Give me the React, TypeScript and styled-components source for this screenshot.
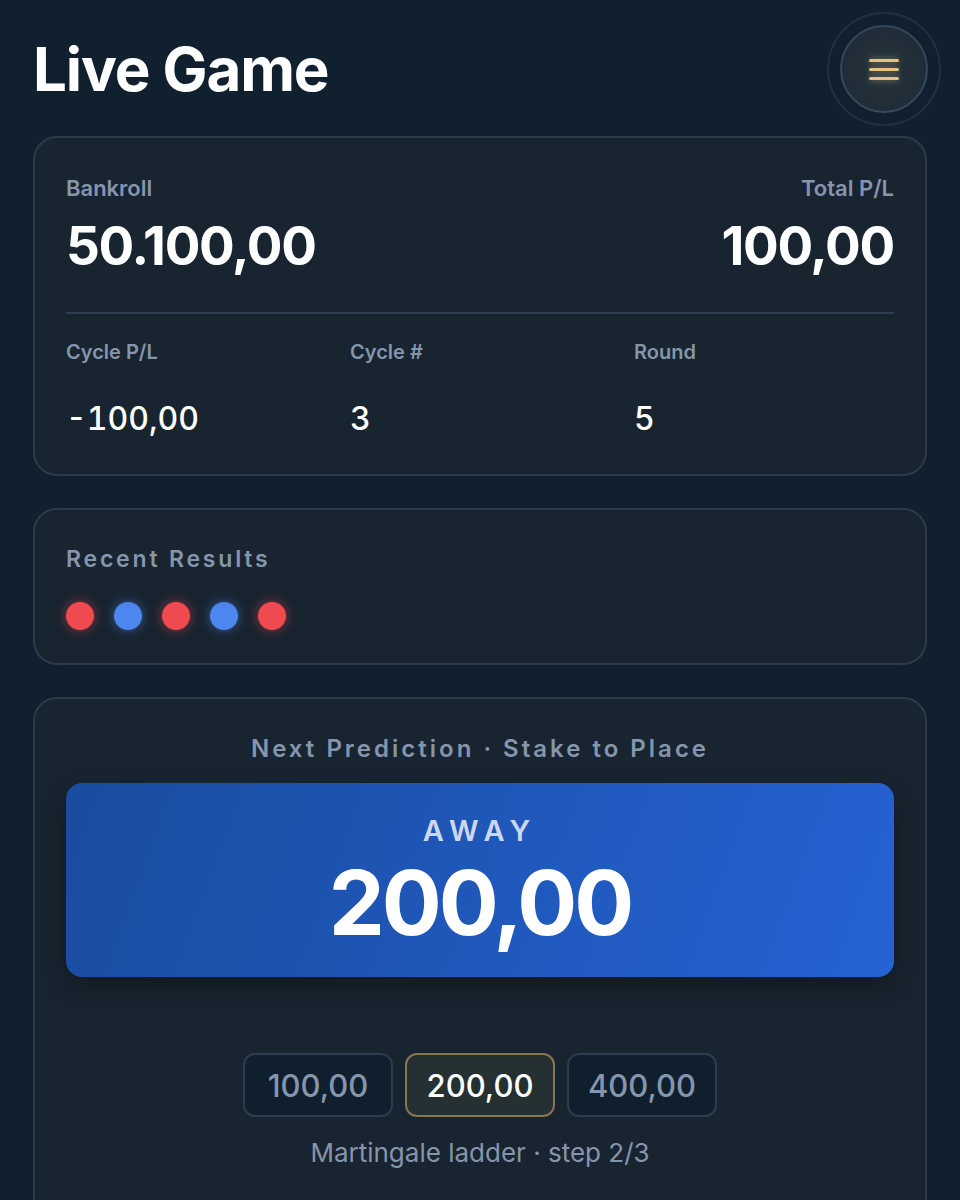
import styled, { createGlobalStyle } from "styled-components";

const GlobalStyle = createGlobalStyle`
	html, body {
		margin: 0;
		padding: 0;
		background: #11202e;
	}
	body {
		font-family: Inter, "Noto Sans", "Liberation Sans", sans-serif;
		color: #ffffff;
		-webkit-font-smoothing: antialiased;
	}
`;

type Side = "home" | "away";

const results: Side[] = ["home", "away", "home", "away", "home"];
const ladder = ["100,00", "200,00", "400,00"];
const currentStep = 1;

export default function App() {
	return (
		<>
			<GlobalStyle />
			<Page>
				<Header>
					<Title>Live Game</Title>
					<MenuRing>
						<MenuButton aria-label="menu">
							<MenuLine />
							<MenuLine />
							<MenuLine />
						</MenuButton>
					</MenuRing>
				</Header>

				<Card>
					<TopRow>
						<Stat>
							<Label>Bankroll</Label>
							<BigValue>50.100,00</BigValue>
						</Stat>
						<Stat $right>
							<Label>Total P/L</Label>
							<BigValue>100,00</BigValue>
						</Stat>
					</TopRow>
					<Divider />
					<MetaGrid>
						<Stat>
							<SmallLabel>Cycle P/L</SmallLabel>
							<MetaValue>-100,00</MetaValue>
						</Stat>
						<Stat>
							<SmallLabel>Cycle #</SmallLabel>
							<MetaValue>3</MetaValue>
						</Stat>
						<Stat>
							<SmallLabel>Round</SmallLabel>
							<MetaValue>5</MetaValue>
						</Stat>
					</MetaGrid>
				</Card>

				<Card $compact>
					<SectionTitle>Recent Results</SectionTitle>
					<Dots>
						{results.map((r, i) => (
							<Dot key={i} $side={r} />
						))}
					</Dots>
				</Card>

				<Card $tall>
					<SectionTitle $center>Next Prediction · Stake to Place</SectionTitle>
					<PredictionBox>
						<PredictionSide>AWAY</PredictionSide>
						<PredictionStake>200,00</PredictionStake>
					</PredictionBox>
					<Ladder>
						{ladder.map((v, i) => (
							<Step key={v} $active={i === currentStep}>
								{v}
							</Step>
						))}
					</Ladder>
					<Caption>Martingale ladder · step 2/3</Caption>
				</Card>
			</Page>
		</>
	);
}

const Page = styled.div`
	display: flex;
	flex-direction: column;
	gap: 32px;
	padding: 12px 33px 40px;
	box-sizing: border-box;
	width: 960px;
	min-height: 1200px;
	background: #11202e;
`;

const Header = styled.header`
	display: flex;
	justify-content: space-between;
	align-items: center;
	margin-bottom: -22px;
`;

const Title = styled.h1`
	margin: 0;
	font-size: 60px;
	font-weight: 700;
	letter-spacing: -1.1px;
	line-height: 1;
	color: #ffffff;
`;

const MenuRing = styled.div`
	display: flex;
	align-items: center;
	justify-content: center;
	width: 114px;
	height: 114px;
	margin-right: -14px;
	border-radius: 50%;
	border: 2px solid rgba(60, 80, 95, 0.35);
	box-sizing: border-box;
`;

const MenuButton = styled.button`
	display: flex;
	flex-direction: column;
	align-items: center;
	justify-content: center;
	gap: 6px;
	width: 88px;
	height: 88px;
	padding: 0;
	border-radius: 50%;
	border: 2px solid #34495c;
	background: radial-gradient(circle, #26343d 0%, #1d2a35 100%);
	cursor: pointer;
`;

const MenuLine = styled.span`
	display: block;
	width: 30px;
	height: 3px;
	border-radius: 2px;
	background: #e3c283;
	box-shadow: 0 0 6px rgba(227, 194, 131, 0.55);
`;

const Card = styled.section<{ $tall?: boolean; $compact?: boolean }>`
	display: flex;
	flex-direction: column;
	padding: ${(p) => (p.$tall ? "34px 31px 60px" : p.$compact ? "33px 31px" : "34px 31px 35px")};
	border-radius: 24px;
	border: 2px solid #2b3b4b;
	background: #18242f;
`;

const TopRow = styled.div`
	display: flex;
	justify-content: space-between;
`;

const Stat = styled.div<{ $right?: boolean }>`
	display: flex;
	flex-direction: column;
	align-items: ${(p) => (p.$right ? "flex-end" : "flex-start")};
`;

const Label = styled.span`
	font-size: 22px;
	font-weight: 600;
	line-height: 32px;
	color: #8595ad;
`;

const BigValue = styled.span`
	margin-top: 10px;
	font-size: 53px;
	font-weight: 700;
	letter-spacing: -1.3px;
	line-height: 64px;
	color: #ffffff;
`;

const Divider = styled.hr`
	width: 100%;
	height: 2px;
	margin: 34px 0 24px;
	border: none;
	background: #2e3e4e;
`;

const MetaGrid = styled.div`
	display: grid;
	grid-template-columns: repeat(3, 1fr);
	gap: 24px;
`;

const SmallLabel = styled.span`
	font-size: 20px;
	font-weight: 600;
	line-height: 28px;
	color: #8595ad;
`;

const MetaValue = styled.span`
	margin-top: 33px;
	font-size: 32px;
	font-weight: 500;
	line-height: 40px;
	font-variant-numeric: tabular-nums;
	color: #ffffff;
`;

const SectionTitle = styled.h2<{ $center?: boolean }>`
	margin: 0;
	font-size: ${(p) => (p.$center ? "24px" : "23px")};
	font-weight: 600;
	letter-spacing: ${(p) => (p.$center ? "3px" : "2.8px")};
	line-height: 32px;
	text-align: ${(p) => (p.$center ? "center" : "left")};
	color: #8595ad;
`;

const Dots = styled.div`
	display: flex;
	gap: 20px;
	margin-top: 27px;
`;

const Dot = styled.span<{ $side: Side }>`
	display: block;
	width: 28px;
	height: 28px;
	border-radius: 50%;
	background: ${(p) => (p.$side === "home" ? "#ef4a50" : "#4e86ef")};
	box-shadow: 0 0 12px
		${(p) => (p.$side === "home" ? "rgba(239, 74, 80, 0.55)" : "rgba(78, 134, 239, 0.55)")};
`;

const PredictionBox = styled.div`
	display: flex;
	flex-direction: column;
	align-items: center;
	margin-top: 18px;
	padding: 30px 0 24px;
	border-radius: 16px;
	background: linear-gradient(110deg, #1a4c9f 0%, #2563d4 100%);
	box-shadow: 0 10px 24px rgba(0, 0, 0, 0.3);
`;

const PredictionSide = styled.span`
	font-size: 29px;
	font-weight: 600;
	letter-spacing: 7px;
	line-height: 36px;
	color: #cdd8f0;
`;

const PredictionStake = styled.span`
	margin-top: 4px;
	font-size: 89px;
	font-weight: 700;
	letter-spacing: -3px;
	line-height: 100px;
	color: #ffffff;
`;

const Ladder = styled.div`
	display: flex;
	justify-content: center;
	gap: 12px;
	margin-top: 76px;
`;

const Step = styled.button<{ $active?: boolean }>`
	width: 150px;
	height: 64px;
	padding: 0;
	border-radius: 12px;
	border: 2px solid ${(p) => (p.$active ? "#8a7550" : "#2c3d4f")};
	background: ${(p) => (p.$active ? "#253033" : "#0f1f2e")};
	color: ${(p) => (p.$active ? "#ffffff" : "#8595ad")};
	font-family: inherit;
	font-size: 31px;
	font-weight: 500;
	cursor: pointer;
`;

const Caption = styled.p`
	margin: 18px 0 0;
	font-size: 26px;
	font-weight: 400;
	line-height: 36px;
	text-align: center;
	color: #8595ad;
`;
